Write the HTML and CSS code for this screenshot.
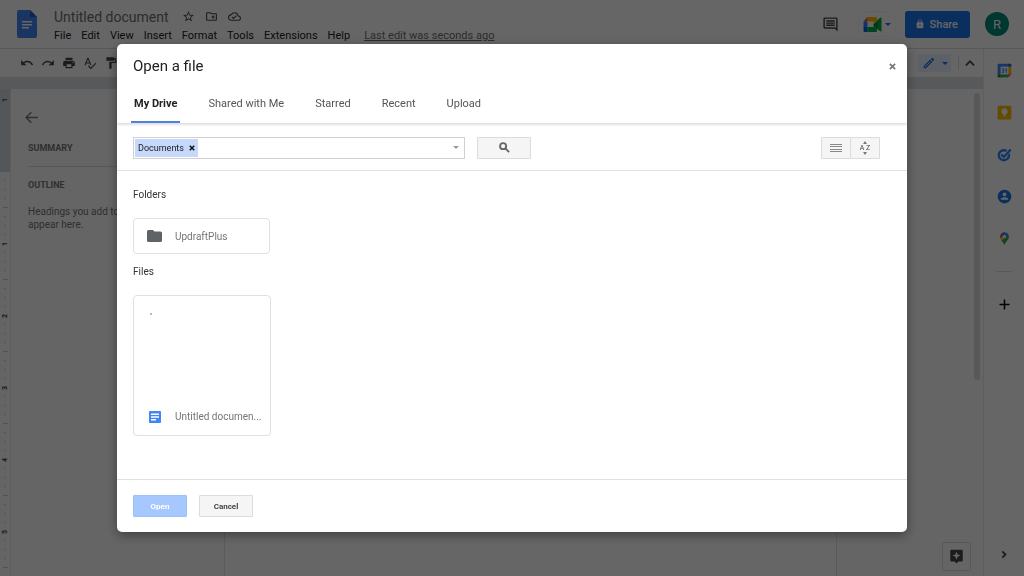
FILE: index.html
```html
<!DOCTYPE html>
<html lang="en">
<head>
  <meta charset="UTF-8">
  <meta name="viewport" content="width=device-width, initial-scale=1.0">
  <title>Untitled document</title>
  <link rel="stylesheet" href="styles.css">
</head>
<body>
  <div class="app">
    <header class="header">
      <svg class="logo" viewBox="0 0 20 28">
        <path fill="#4285f4" d="M2 0h11l7 7v19a2 2 0 0 1-2 2H2a2 2 0 0 1-2-2V2a2 2 0 0 1 2-2z"/>
        <path fill="#2a5bb8" d="M13 0l7 7h-7z"/>
        <path fill="#fff" d="M5 11h10v1.500H5zM5 14h10v1.500H5zM5 17h7v1.500H5z"/>
      </svg>
      <div class="doc">
        <div class="doc-name">
          <span class="doc-title">Untitled document</span>
          <button class="icon-btn" aria-label="Star">
            <svg class="icon-sm" viewBox="0 0 24 24"><path d="M22 9.240l-7.190-.62L12 2 9.190 8.630 2 9.240l5.460 4.730L5.820 21 12 17.270 18.180 21l-1.630-7.030L22 9.240zM12 15.400l-3.760 2.270 1-4.280-3.320-2.880 4.380-.38L12 6.100l1.710 4.040 4.380.38-3.320 2.880 1 4.280L12 15.400z"/></svg>
          </button>
          <button class="icon-btn" aria-label="Move">
            <svg class="icon-sm" viewBox="0 0 24 24"><path d="M20 6h-8l-2-2H4a2 2 0 0 0-2 2v12a2 2 0 0 0 2 2h16a2 2 0 0 0 2-2V8a2 2 0 0 0-2-2zm0 12H4V6h5.200l2 2H20v10zm-8-4h2v2h2v-2h2v-2h-2v-2h-2v2h-2v2z"/></svg>
          </button>
          <button class="icon-btn" aria-label="Document status">
            <svg class="icon-sm" viewBox="0 0 24 24"><path d="M19.350 10.040A7.490 7.490 0 0 0 12 4C9.110 4 6.600 5.640 5.350 8.040A5.990 5.990 0 0 0 0 14c0 3.310 2.690 6 6 6h13c2.760 0 5-2.240 5-5 0-2.640-2.050-4.780-4.650-4.960zM19 18H6c-2.210 0-4-1.790-4-4 0-2.050 1.530-3.760 3.560-3.970l1.070-.11.5-.95A5.470 5.470 0 0 1 12 6c2.620 0 4.880 1.860 5.390 4.430l.3 1.500 1.530.11A2.980 2.980 0 0 1 22 15c0 1.650-1.350 3-3 3zm-9-3.820l-2.090-2.090L6.500 13.500 10 17l6.010-6.010-1.410-1.410z"/></svg>
          </button>
        </div>
        <nav class="menu">
          <button>File</button>
          <button>Edit</button>
          <button>View</button>
          <button>Insert</button>
          <button>Format</button>
          <button>Tools</button>
          <button>Extensions</button>
          <button>Help</button>
          <a class="last-edit" href="#">Last edit was seconds ago</a>
        </nav>
      </div>
      <button class="icon-btn comments" aria-label="Comment history">
        <svg class="icon-lg" viewBox="0 0 24 24"><path d="M21.990 4c0-1.100-.89-2-1.990-2H4a2 2 0 0 0-2 2v12a2 2 0 0 0 2 2h14l4 4-.01-18zM20 4v13.170L18.830 16H4V4h16zM6 12h12v2H6zm0-3h12v2H6zm0-3h12v2H6z"/></svg>
      </button>
      <button class="meet" aria-label="Join a call">
        <svg class="meet-logo" viewBox="0 0 18 15">
          <path fill="#00832d" d="M10 7.500l2 3 3 2V2.500l-3 2z"/>
          <path fill="#00ac47" d="M14 3l3-2.500c.4-.3 1 0 1 .5v13c0 .5-.6.8-1 .5L14 12z"/>
          <path fill="#0066da" d="M0 10h4v5H1a1 1 0 0 1-1-1z"/>
          <path fill="#e94235" d="M4 0L0 4.500h4z"/>
          <path fill="#2684fc" d="M0 4.500h4V10H0z"/>
          <path fill="#ffba00" d="M4 0h8.500a1 1 0 0 1 1 1v3.500L10 7.500v-3H4z"/>
          <path fill="#00ac47" d="M4 10h6V7.500l3.500 3V14a1 1 0 0 1-1 1H4z"/>
        </svg>
        <span class="caret blue"></span>
      </button>
      <button class="share">
        <svg viewBox="0 0 24 24"><path d="M18 8h-1V6A5 5 0 0 0 7 6v2H6a2 2 0 0 0-2 2v10a2 2 0 0 0 2 2h12a2 2 0 0 0 2-2V10a2 2 0 0 0-2-2zM9 6a3 3 0 0 1 6 0v2H9V6zm3 11a2 2 0 1 1 0-4 2 2 0 0 1 0 4z"/></svg>
        Share
      </button>
      <button class="avatar">R</button>
    </header>

    <div class="workspace">
      <div class="editor">
        <div class="toolbar">
          <button class="icon-btn" aria-label="Undo">
            <svg class="icon-md" viewBox="0 0 24 24"><path d="M12.500 8c-2.650 0-5.050.99-6.900 2.600L2 7v9h9l-3.620-3.620A7.960 7.960 0 0 1 12.500 10.500c3.540 0 6.550 2.310 7.600 5.500l2.370-.78C21.080 11.030 17.150 8 12.500 8z"/></svg>
          </button>
          <button class="icon-btn" aria-label="Redo">
            <svg class="icon-md" viewBox="0 0 24 24"><path d="M18.400 10.600A10.450 10.450 0 0 0 11.500 8c-4.650 0-8.580 3.030-9.960 7.220L3.900 16a8 8 0 0 1 7.600-5.500c1.950 0 3.730.72 5.120 1.880L13 16h9V7l-3.600 3.600z"/></svg>
          </button>
          <button class="icon-btn" aria-label="Print">
            <svg class="icon-md" viewBox="0 0 24 24"><path d="M19 8H5a3 3 0 0 0-3 3v6h4v4h12v-4h4v-6a3 3 0 0 0-3-3zm-3 11H8v-5h8v5zm3-7a1 1 0 1 1 0-2 1 1 0 0 1 0 2zm-1-9H6v4h12V3z"/></svg>
          </button>
          <button class="icon-btn" aria-label="Spelling and grammar check">
            <svg class="icon-md" viewBox="0 0 24 24"><path d="M12.450 16h2.090L9.430 3H7.570L2.460 16h2.090l1.120-3h5.640l1.140 3zm-6.020-5L8.500 5.480 10.570 11H6.430zm15.160.59l-8.090 8.090L9.830 16l-1.410 1.410 5.090 5.090L23 13l-1.410-1.410z"/></svg>
          </button>
          <button class="icon-btn" aria-label="Paint format">
            <svg class="icon-md" viewBox="0 0 24 24"><path d="M18 4V3a1 1 0 0 0-1-1H5a1 1 0 0 0-1 1v4a1 1 0 0 0 1 1h12a1 1 0 0 0 1-1V6h1v4H9v11a1 1 0 0 0 1 1h2a1 1 0 0 0 1-1v-9h8V4h-3z"/></svg>
          </button>
          <button class="mode" aria-label="Editing mode">
            <svg class="icon-md" viewBox="0 0 24 24"><path d="M3 17.250V21h3.750L17.810 9.940l-3.750-3.750L3 17.250zM5.900 19H5v-.9l9.060-9.060.9.9L5.900 19zM20.710 5.630l-2.340-2.340a1 1 0 0 0-1.410 0l-1.830 1.830 3.750 3.750 1.830-1.830a1 1 0 0 0 0-1.410z"/></svg>
            <span class="caret blue"></span>
          </button>
          <button class="icon-btn collapse" aria-label="Hide the menus">
            <svg class="icon-md" viewBox="0 0 24 24"><path d="M12 7l-8 8 2 2 6-6 6 6 2-2z"/></svg>
          </button>
        </div>
        <div class="ruler-top"></div>
        <div class="canvas">
          <div class="ruler">
            <div class="ruler-margin"><span>1</span></div>
            <div class="ruler-scale">
              <span>1</span><span>2</span><span>3</span><span>4</span><span>5</span>
            </div>
          </div>
          <aside class="outline">
            <button class="icon-btn back" aria-label="Close document outline">
              <svg class="icon-lg" viewBox="0 0 24 24"><path d="M21 11H6.800l5.600-5.600L11 4l-8 8 8 8 1.400-1.400L6.800 13H21z"/></svg>
            </button>
            <h2>SUMMARY</h2>
            <hr>
            <h2>OUTLINE</h2>
            <p>Headings you add to the document will appear here.</p>
          </aside>
          <main class="page"></main>
          <div class="canvas-right">
            <div class="scrollbar"></div>
            <button class="explore" aria-label="Explore">
              <svg viewBox="0 0 24 24"><path d="M20 1H4a2 2 0 0 0-2 2v15a2 2 0 0 0 2 2h5l3 3 3-3h5a2 2 0 0 0 2-2V3a2 2 0 0 0-2-2zm-6.200 11.300L12 17l-1.800-4.700L5.500 10.500l4.700-1.800L12 4l1.800 4.700 4.700 1.800z"/></svg>
            </button>
          </div>
        </div>
      </div>

      <aside class="sidebar">
        <button class="icon-btn" aria-label="Calendar">
          <svg viewBox="0 0 24 24">
            <path fill="#4285f4" d="M3 1h16v5H6v12H1V3a2 2 0 0 1 2-2z"/>
            <path fill="#1967d2" d="M18 1h3a2 2 0 0 1 2 2v3h-5z"/>
            <path fill="#fbbc04" d="M18 6h5v12h-5z"/>
            <path fill="#34a853" d="M6 18h12v5H6z"/>
            <path fill="#188038" d="M1 18h5v5H3a2 2 0 0 1-2-2z"/>
            <path fill="#ea4335" d="M18 18h5l-5 5z"/>
            <path fill="#fff" d="M6 6h12v12H6z"/>
            <path fill="none" stroke="#4285f4" stroke-width="1.500" d="M7.500 9h3.500v6H7.500M8 12h3M13 10l2-1v7"/>
          </svg>
        </button>
        <button class="icon-btn" aria-label="Keep">
          <svg viewBox="0 0 24 24">
            <rect fill="#fbbc04" x="1" y="1" width="22" height="22" rx="2"/>
            <path fill="#fff" d="M12 5a5 5 0 0 0-2.500 9.300V16h5v-1.700A5 5 0 0 0 12 5zM9.500 17h5v1.500h-5z"/>
          </svg>
        </button>
        <button class="icon-btn" aria-label="Tasks">
          <svg viewBox="0 0 24 24">
            <circle cx="11" cy="13" r="8" fill="none" stroke="#2684fc" stroke-width="4"/>
            <path fill="none" stroke="#fff" stroke-width="6" d="M13 13l8-8"/>
            <path fill="none" stroke="#2684fc" stroke-width="3.500" d="M7 12l4 4L22 4"/>
          </svg>
        </button>
        <button class="icon-btn" aria-label="Contacts">
          <svg viewBox="0 0 24 24">
            <circle cx="12" cy="12" r="11" fill="#1a73e8"/>
            <circle cx="12" cy="8.500" r="3" fill="#fff"/>
            <path fill="#fff" d="M6 17v-1c0-2 4-3 6-3s6 1 6 3v1z"/>
          </svg>
        </button>
        <button class="icon-btn" aria-label="Maps">
          <svg viewBox="0 0 24 24">
            <path fill="#34a853" d="M12 23c0-5 7-8 7-14a7 7 0 0 0-.7-3L7 15c2 3 4 4 5 8z"/>
            <path fill="#fbbc04" d="M7 15l7.500-8.500L10 8l-4.300 4.500z"/>
            <path fill="#4285f4" d="M12 2c3 0 5.300 1.700 6.300 4L13 12l-3-4 4-5.700z"/>
            <path fill="#1a73e8" d="M6.600 4.500A7 7 0 0 1 14 2.300L9.500 7.500z"/>
            <path fill="#ea4335" d="M6.600 4.500A7 7 0 0 0 5.700 12.500l4-4.800z"/>
            <circle cx="12" cy="9" r="2.600" fill="#fff"/>
          </svg>
        </button>
        <hr>
        <button class="icon-btn add" aria-label="Get add-ons">
          <svg viewBox="0 0 24 24"><path fill="#000" d="M20 13.200h-6.800V20h-2.400v-6.800H4v-2.400h6.800V4h2.400v6.800H20z"/></svg>
        </button>
        <button class="icon-btn hide" aria-label="Hide side panel">
          <svg viewBox="0 0 24 24"><path d="M9.500 6L7.500 8l4 4-4 4 2 2 6-6z"/></svg>
        </button>
      </aside>
    </div>
  </div>

  <div class="overlay">
    <div class="dialog" role="dialog" aria-labelledby="dialogTitle">
      <div class="dialog-head">
        <h1 id="dialogTitle">Open a file</h1>
        <button class="close" aria-label="Close">
          <svg viewBox="0 0 8 8"><path d="M1 1l6 6M7 1L1 7"/></svg>
        </button>
      </div>
      <div class="tabs" role="tablist">
        <button class="tab active" role="tab" aria-selected="true">My Drive</button>
        <button class="tab" role="tab">Shared with Me</button>
        <button class="tab" role="tab">Starred</button>
        <button class="tab" role="tab">Recent</button>
        <button class="tab" role="tab">Upload</button>
      </div>
      <div class="search-row">
        <div class="search-box">
          <span class="chip">Documents
            <button aria-label="Remove Documents"><svg viewBox="0 0 8 8"><path d="M1 1l6 6M7 1L1 7"/></svg></button>
          </span>
          <input type="text" aria-label="Search">
          <span class="caret"></span>
        </div>
        <button class="btn search-btn" aria-label="Search">
          <svg viewBox="0 0 12 12"><circle cx="4.500" cy="4.500" r="3.300"/><path d="M7 7l4 4"/></svg>
        </button>
        <div class="view-btns">
          <button class="btn" aria-label="List view">
            <svg viewBox="0 0 12 10"><path d="M0 1.500h12M0 3.500h12M0 6.500h12M0 8.500h12"/></svg>
          </button>
          <button class="btn sort" aria-label="Sort">
            <span class="arrow-up"></span>
            <span class="az">A Z</span>
            <span class="arrow-down"></span>
          </button>
        </div>
      </div>
      <div class="content">
        <h2>Folders</h2>
        <button class="folder">
          <svg viewBox="2 4 20 16"><path d="M10 4H4a2 2 0 0 0-2 2v12a2 2 0 0 0 2 2h16a2 2 0 0 0 2-2V8a2 2 0 0 0-2-2h-8l-2-2z"/></svg>
          <span>UpdraftPlus</span>
        </button>
        <h2>Files</h2>
        <button class="file">
          <span class="thumb"><i></i></span>
          <span class="file-name">
            <svg viewBox="0 0 12 12">
              <rect width="12" height="12" rx="1" fill="#4285f4"/>
              <path fill="#fff" d="M2 2.500h8v1.500H2zM2 5.200h8v1.500H2zM2 8h5v1.500H2z"/>
            </svg>
            <span>Untitled documen...</span>
          </span>
        </button>
      </div>
      <div class="dialog-foot">
        <button class="btn primary" disabled>Open</button>
        <button class="btn">Cancel</button>
      </div>
    </div>
  </div>
</body>
</html>
```

FILE: styles.css
```css
* {
  box-sizing: border-box;
}

body {
  margin: 0;
  font-family: Roboto, Arial, sans-serif;
  font-size: 11px;
  color: #202124;
  overflow: hidden;
}

button {
  font-family: inherit;
  font-size: inherit;
  color: inherit;
  background: none;
  border: none;
  padding: 0;
  cursor: pointer;
}

svg {
  display: block;
  fill: #444746;
}

h1, h2, p {
  margin: 0;
}

hr {
  border: none;
  border-top: 1px solid #dadce0;
}

.app {
  height: 100vh;
  display: flex;
  flex-direction: column;
  background: #fff;
}

.icon-btn {
  display: flex;
}

.icon-sm {
  width: 13px;
  height: 13px;
}

.icon-md {
  width: 14px;
  height: 14px;
}

.icon-lg {
  width: 17px;
  height: 17px;
}

.caret {
  border: 3px solid transparent;
  border-top-color: #999;
  border-bottom: none;
}

.caret.blue {
  border-top-color: #1a73e8;
}

/* header */
.header {
  height: 48px;
  flex: none;
  display: flex;
  align-items: center;
  padding: 0 15px 0 17px;
}

.logo {
  width: 20px;
  height: 28px;
  margin-right: 17px;
}

.doc {
  flex: 1;
  padding-top: 3px;
}

.doc-name {
  display: flex;
  align-items: center;
  gap: 10px;
  height: 20px;
}

.doc-title {
  font-size: 14px;
  color: #6b6f74;
  margin-right: 3px;
}

.menu {
  display: flex;
  align-items: center;
  gap: 10px;
  height: 18px;
}

.last-edit {
  color: #6b6f74;
  margin-left: 4px;
}

.meet {
  display: flex;
  align-items: center;
  gap: 3px;
  height: 26px;
  padding: 0 5px;
  margin: 0 8px 0 18px;
  border: 1px solid #f1f3f4;
  border-radius: 13px;
}

.meet-logo {
  width: 19px;
  height: 15px;
}

.share {
  display: flex;
  align-items: center;
  gap: 5px;
  height: 27px;
  padding: 0 12px 0 10px;
  border-radius: 3px;
  background: #1a73e8;
  color: #fff;
  font-weight: 500;
}

.share svg {
  width: 10px;
  height: 10px;
  fill: #fff;
}

.avatar {
  width: 24px;
  height: 24px;
  margin-left: 15px;
  border-radius: 50%;
  background: #00897b;
  color: #fff;
  font-size: 13px;
}

/* editor */
.workspace {
  flex: 1;
  display: flex;
  border-top: 1px solid #dadce0;
  min-height: 0;
}

.editor {
  flex: 1;
  display: flex;
  flex-direction: column;
  min-width: 0;
}

.toolbar {
  display: flex;
  align-items: center;
  gap: 7px;
  height: 28px;
  flex: none;
  padding: 0 6px 0 20px;
}

.mode {
  display: flex;
  align-items: center;
  gap: 6px;
  height: 18px;
  margin-left: auto;
  padding: 0 3px 0 4px;
  background: #e8f0fe;
}

.mode svg {
  fill: #1a73e8;
}

.collapse {
  border-left: 1px solid #dadce0;
  padding-left: 4px;
}

.ruler-top {
  height: 12px;
  flex: none;
  background: #dadfe3;
}

.canvas {
  flex: 1;
  display: flex;
  min-height: 0;
  background: #fcfcfc;
}

.ruler {
  width: 11px;
  flex: none;
  overflow: hidden;
  border-right: 1px solid #ececec;
  color: #444;
  font-size: 7px;
  font-weight: bold;
}

.ruler span {
  writing-mode: vertical-rl;
  transform: rotate(180deg);
}

.ruler-margin {
  display: flex;
  justify-content: center;
  align-items: flex-start;
  height: 83px;
  padding-top: 9px;
  background: #d3dade;
}

.ruler-scale {
  background:
    repeating-linear-gradient(transparent 0 35px, #ccc 35px 36px, transparent 36px 72px) 3px 0 / 5px 100% no-repeat,
    repeating-linear-gradient(transparent 0 8px, #d4d4d4 8px 9px) 4px 0 / 2px 100% no-repeat;
  padding-top: 36px;
}

.ruler-scale span {
  display: flex;
  align-items: center;
  justify-content: center;
  width: 10px;
  height: 72px;
}

.outline {
  width: 213px;
  flex: none;
  padding: 20px 16px 0 17px;
  color: #74787c;
  font-size: 10px;
  line-height: 13px;
}

.outline .back {
  margin: 0 0 16px -5px;
}

.outline svg {
  fill: #74787c;
}

.outline h2 {
  font-size: 9px;
  line-height: 12px;
}

.outline hr {
  margin: 12px 0;
}

.outline p {
  margin-top: 14px;
}

.page {
  flex: 1;
  background: #fff;
  border: solid #e4e4e4;
  border-width: 0 1px;
}

.canvas-right {
  width: 146px;
  flex: none;
  display: flex;
  flex-direction: column;
  justify-content: space-between;
  align-items: flex-end;
  padding: 4px 3px 5px 0;
}

.scrollbar {
  width: 6px;
  height: 60%;
  border-radius: 3px;
  background: #dadce0;
}

.explore {
  width: 29px;
  height: 29px;
  margin-right: 9px;
  padding: 6px;
  border: 1px solid #dadce0;
  border-radius: 2px;
}

.explore svg {
  width: 15px;
  height: 15px;
}

/* side panel */
.sidebar {
  width: 41px;
  flex: none;
  display: flex;
  flex-direction: column;
  align-items: center;
  gap: 27px;
  padding: 14px 0;
  border-left: 1px solid #e8eaed;
}

.sidebar svg {
  width: 15px;
  height: 15px;
}

.sidebar hr {
  width: 16px;
  margin: -2px 0;
}

.sidebar .hide {
  margin-top: auto;
}

/* file picker */
.overlay {
  position: fixed;
  inset: 0;
  display: flex;
  justify-content: center;
  padding: 44px 0;
  background: rgba(0, 0, 0, 0.6);
}

.dialog {
  width: 90%;
  max-width: 790px;
  display: flex;
  flex-direction: column;
  background: #fff;
  border-radius: 5px;
  box-shadow: 0 3px 12px rgba(0, 0, 0, 0.4);
}

.dialog-head {
  display: flex;
  align-items: center;
  justify-content: space-between;
  height: 44px;
  padding: 0 11px 0 16px;
}

.dialog-head h1 {
  font-size: 15px;
  font-weight: normal;
}

.close svg {
  width: 7px;
  height: 7px;
  stroke: #777;
  stroke-width: 2;
}

.tabs {
  display: flex;
  height: 35px;
  gap: 25px;
  padding-left: 14px;
  box-shadow: 0 2px 2px rgba(0, 0, 0, 0.12);
}

.tab {
  padding: 0 3px 3px;
  border-bottom: 2px solid transparent;
  color: #555;
}

.tab.active {
  border-color: #4d82dd;
  color: #222;
  font-weight: bold;
}

.search-row {
  display: flex;
  align-items: center;
  height: 48px;
  padding: 2px 27px 0 16px;
  border-bottom: 1px solid #e0e0e0;
}

.search-box {
  display: flex;
  align-items: center;
  width: 332px;
  height: 22px;
  padding: 1px 5px 1px 1px;
  border: 1px solid #d0d0d0;
}

.search-box input {
  flex: 1;
  min-width: 0;
  border: none;
  outline: none;
}

.chip {
  display: flex;
  align-items: center;
  gap: 5px;
  height: 18px;
  padding: 0 3px;
  background: #c6d9fb;
  font-size: 9px;
}

.chip svg {
  width: 6px;
  height: 6px;
  stroke: #111;
  stroke-width: 2;
}

.btn {
  display: flex;
  align-items: center;
  justify-content: center;
  width: 54px;
  height: 22px;
  background: #f5f5f5;
  border: 1px solid #dcdcdc;
  border-radius: 1px;
  color: #444;
  font-size: 8px;
  font-weight: bold;
}

.search-btn {
  margin-left: 12px;
}

.search-btn svg {
  width: 11px;
  height: 11px;
  fill: none;
  stroke: #666;
  stroke-width: 2;
}

.view-btns {
  display: flex;
  margin-left: auto;
}

.view-btns .btn {
  width: 30px;
}

.view-btns svg {
  width: 12px;
  height: 10px;
  stroke: #888;
  stroke-width: 1;
}

.view-btns .sort {
  flex-direction: column;
  width: 29px;
  border-left: none;
}

.az {
  font-size: 7px;
  font-weight: normal;
  line-height: 8px;
}

.arrow-up,
.arrow-down {
  border: 2px solid transparent;
}

.arrow-up {
  border-top: none;
  border-bottom: 3px solid #777;
}

.arrow-down {
  border-bottom: none;
  border-top: 3px solid #777;
}

.content {
  flex: 1;
  padding: 18px 16px 0;
  color: #757575;
  font-size: 10px;
}

.content h2 {
  color: #333;
  font-size: 10px;
  font-weight: normal;
  line-height: 12px;
}

.folder {
  display: flex;
  align-items: center;
  gap: 13px;
  width: 137px;
  height: 36px;
  margin: 17px 0 12px;
  padding-left: 13px;
  border: 1px solid #e0e0e0;
  border-radius: 4px;
}

.folder svg {
  width: 15px;
  height: 12px;
  fill: #5f6368;
}

.file {
  display: flex;
  flex-direction: column;
  width: 138px;
  height: 141px;
  margin-top: 17px;
  border: 1px solid #e0e0e0;
  border-radius: 4px;
  text-align: left;
}

.thumb {
  flex: 1;
  padding: 17px 16px;
}

.thumb i {
  display: block;
  width: 2px;
  height: 2px;
  background: #bbb;
}

.file-name {
  display: flex;
  align-items: center;
  gap: 14px;
  width: 100%;
  height: 37px;
  padding: 0 5px 0 15px;
}

.file-name svg {
  width: 12px;
  height: 12px;
  flex: none;
}

.file-name span {
  overflow: hidden;
  text-overflow: ellipsis;
  white-space: nowrap;
}

.dialog-foot {
  display: flex;
  align-items: center;
  gap: 12px;
  height: 53px;
  padding: 0 16px;
  border-top: 1px solid #e0e0e0;
}

.primary {
  background: #a6c8ff;
  border-color: #9cc0fb;
  color: #fff;
}
```
